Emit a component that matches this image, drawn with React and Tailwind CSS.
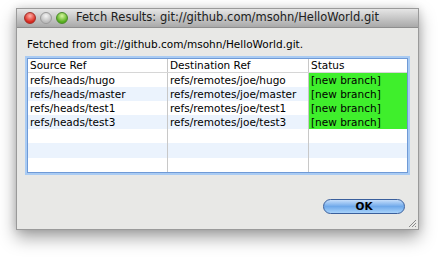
import React from "react";

const ROWS = [
  ["refs/heads/hugo", "refs/remotes/joe/hugo", "[new branch]"],
  ["refs/heads/master", "refs/remotes/joe/master", "[new branch]"],
  ["refs/heads/test1", "refs/remotes/joe/test1", "[new branch]"],
  ["refs/heads/test3", "refs/remotes/joe/test3", "[new branch]"],
  ["", "", ""],
  ["", "", ""],
  ["", "", ""],
];

function TrafficLight({ from, to, edge }) {
  return (
    <span
      className="block h-[12px] w-[12px] rounded-full border"
      style={{ background: `radial-gradient(circle at 50% 30%, ${from}, ${to} 70%)`, borderColor: edge }}
    />
  );
}

export default function App() {
  return (
    <div
      className="h-[257px] w-[442px] overflow-hidden bg-white pl-[16px] pt-[8px]"
      style={{ fontFamily: '"DejaVu Sans", "Liberation Sans", sans-serif' }}
    >
      <div className="flex h-[222px] w-[403px] flex-col border border-[#9a9a9a] bg-[#e8e8e6] shadow-[0_8px_16px_rgba(0,0,0,0.35),0_0_8px_rgba(0,0,0,0.15)]">
        {/* title bar */}
        <div className="flex h-[19px] shrink-0 items-center border-b border-[#8e8e8e] bg-gradient-to-b from-[#e6e6e6] to-[#a9a9a9] pl-[7px]">
          <div className="flex items-center gap-[4px]">
            <TrafficLight from="#ffb0a8" to="#d8261c" edge="#a0302a" />
            <TrafficLight from="#f4f4f4" to="#bdbdbd" edge="#9a9a9a" />
            <TrafficLight from="#d8f7a0" to="#54ad1c" edge="#4a8a2a" />
          </div>
          <span className="ml-[8px] text-[11.5px] leading-none text-[#202020]">
            Fetch Results: git://github.com/msohn/HelloWorld.git
          </span>
        </div>

        {/* body */}
        <div className="flex flex-1 flex-col px-[10px]">
          <p className="mt-[9px] text-[10.5px] leading-[14px] text-black">Fetched from git://github.com/msohn/HelloWorld.git.</p>

          <div className="mt-[7px] w-[381px] border border-[#6f9ad6] bg-white shadow-[0_0_0_2px_#a9cbf3]">
            <div className="grid grid-cols-[140px_141px_98px] border-b border-[#d6d6d6] text-[10.5px] leading-[13px] text-black">
              <div className="border-r border-[#c8c8c8] px-[2px]">Source Ref</div>
              <div className="border-r border-[#c8c8c8] px-[2px]">Destination Ref</div>
              <div className="px-[2px]">Status</div>
            </div>
            {ROWS.map((row, i) => (
              <div
                key={i}
                className={`grid h-[14.1px] grid-cols-[140px_141px_98px] text-[10.5px] leading-[14.1px] text-black ${
                  i % 2 === 1 ? "bg-[#ebf3fd]" : "bg-white"
                }`}
              >
                <div className="border-r border-[#c8c8c8] px-[2px]">{row[0]}</div>
                <div className="border-r border-[#c8c8c8] px-[2px]">{row[1]}</div>
                <div className={`px-[2px] ${row[2] ? "bg-[#3fef2c]" : ""}`}>{row[2]}</div>
              </div>
            ))}
          </div>

          <div className="mt-[26px] flex justify-end pr-[3px]">
            <button
              type="button"
              className="flex h-[15px] w-[82px] items-center justify-center rounded-full border border-[#3a5f9c] bg-gradient-to-b from-[#c6defa] via-[#6fa9ea] to-[#a8d3fb] text-[10.5px] font-bold leading-none text-black"
            >
              OK
            </button>
          </div>
        </div>
        <div className="relative h-0">
          <svg className="absolute bottom-[1px] right-[1px]" width="9" height="9" viewBox="0 0 9 9">
            <path d="M8 1L1 8M8 4L4 8M8 7L7 8" stroke="#8a8a8a" strokeWidth="1" />
          </svg>
        </div>
      </div>
    </div>
  );
}
